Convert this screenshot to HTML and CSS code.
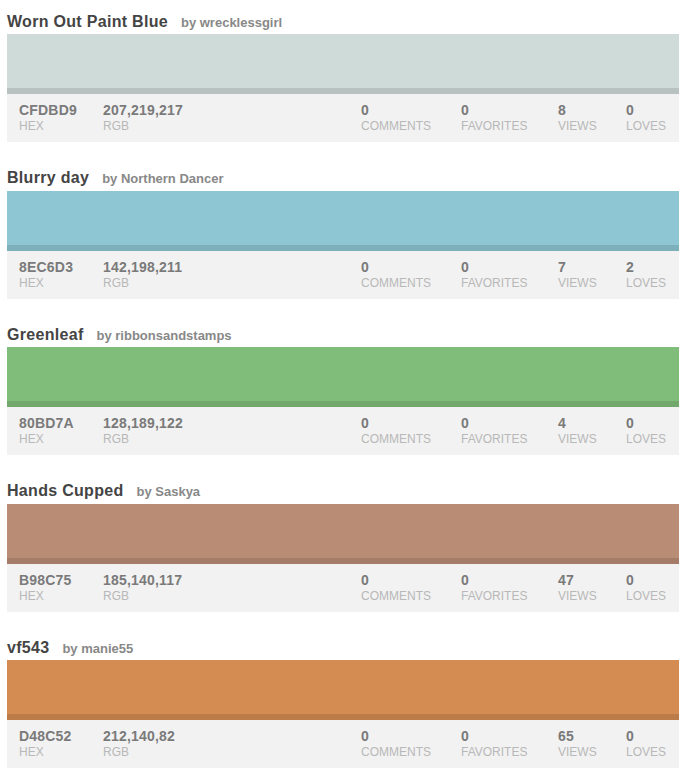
FILE: index.html
```html
<!DOCTYPE html>
<html>
<head>
<meta charset="utf-8">
<link rel="stylesheet" href="styles.css">
</head>
<body>
<div class="list">
  <div class="color">
    <div class="head"><span class="title">Worn Out Paint Blue</span><span class="by">by wrecklessgirl</span></div>
    <div class="swatch" style="background:#CFDBD9"></div>
    <div class="panel">
      <div class="stat"><b>CFDBD9</b><span>HEX</span></div>
      <div class="stat"><b>207,219,217</b><span>RGB</span></div>
      <div class="stat"><b>0</b><span>COMMENTS</span></div>
      <div class="stat"><b>0</b><span>FAVORITES</span></div>
      <div class="stat"><b>8</b><span>VIEWS</span></div>
      <div class="stat"><b>0</b><span>LOVES</span></div>
    </div>
  </div>
  <div class="color">
    <div class="head"><span class="title">Blurry day</span><span class="by">by Northern Dancer</span></div>
    <div class="swatch" style="background:#8EC6D3"></div>
    <div class="panel">
      <div class="stat"><b>8EC6D3</b><span>HEX</span></div>
      <div class="stat"><b>142,198,211</b><span>RGB</span></div>
      <div class="stat"><b>0</b><span>COMMENTS</span></div>
      <div class="stat"><b>0</b><span>FAVORITES</span></div>
      <div class="stat"><b>7</b><span>VIEWS</span></div>
      <div class="stat"><b>2</b><span>LOVES</span></div>
    </div>
  </div>
  <div class="color">
    <div class="head"><span class="title">Greenleaf</span><span class="by">by ribbonsandstamps</span></div>
    <div class="swatch" style="background:#80BD7A"></div>
    <div class="panel">
      <div class="stat"><b>80BD7A</b><span>HEX</span></div>
      <div class="stat"><b>128,189,122</b><span>RGB</span></div>
      <div class="stat"><b>0</b><span>COMMENTS</span></div>
      <div class="stat"><b>0</b><span>FAVORITES</span></div>
      <div class="stat"><b>4</b><span>VIEWS</span></div>
      <div class="stat"><b>0</b><span>LOVES</span></div>
    </div>
  </div>
  <div class="color">
    <div class="head"><span class="title">Hands Cupped</span><span class="by">by Saskya</span></div>
    <div class="swatch" style="background:#B98C75"></div>
    <div class="panel">
      <div class="stat"><b>B98C75</b><span>HEX</span></div>
      <div class="stat"><b>185,140,117</b><span>RGB</span></div>
      <div class="stat"><b>0</b><span>COMMENTS</span></div>
      <div class="stat"><b>0</b><span>FAVORITES</span></div>
      <div class="stat"><b>47</b><span>VIEWS</span></div>
      <div class="stat"><b>0</b><span>LOVES</span></div>
    </div>
  </div>
  <div class="color">
    <div class="head"><span class="title">vf543</span><span class="by">by manie55</span></div>
    <div class="swatch" style="background:#D48C52"></div>
    <div class="panel">
      <div class="stat"><b>D48C52</b><span>HEX</span></div>
      <div class="stat"><b>212,140,82</b><span>RGB</span></div>
      <div class="stat"><b>0</b><span>COMMENTS</span></div>
      <div class="stat"><b>0</b><span>FAVORITES</span></div>
      <div class="stat"><b>65</b><span>VIEWS</span></div>
      <div class="stat"><b>0</b><span>LOVES</span></div>
    </div>
  </div>
</div>
</body>
</html>
```
FILE: styles.css
```css
html, body {
  margin: 0;
  padding: 0;
  background: #fff;
}
body {
  font-family: "Liberation Sans", Arial, sans-serif;
}
.list {
  width: 672px;
  padding: 0 7px;
}
.color {
  margin-bottom: 14.5px;
}
.head {
  height: 34px;
  box-sizing: border-box;
  padding-top: 11.5px;
  display: flex;
  align-items: baseline;
}
.title {
  font-size: 16px;
  line-height: 19px;
  font-weight: bold;
  letter-spacing: 0.3px;
  color: #444;
}
.by {
  font-size: 13px;
  font-weight: bold;
  color: #888;
  margin-left: 13px;
}
.swatch {
  height: 54px;
  border-bottom: 6px solid rgba(0, 0, 0, 0.11);
}
.panel {
  height: 48px;
  box-sizing: border-box;
  background: #f2f2f2;
  padding: 8px 12px 0;
  display: grid;
  grid-template-columns: 84px 1fr 100px 97px 68px 41px;
}
.stat b {
  display: block;
  font-size: 14px;
  line-height: 16px;
  letter-spacing: 0.2px;
  color: #7a7a7a;
}
.stat span {
  display: block;
  font-size: 12px;
  line-height: 17px;
  color: #b8b8b8;
}
```
